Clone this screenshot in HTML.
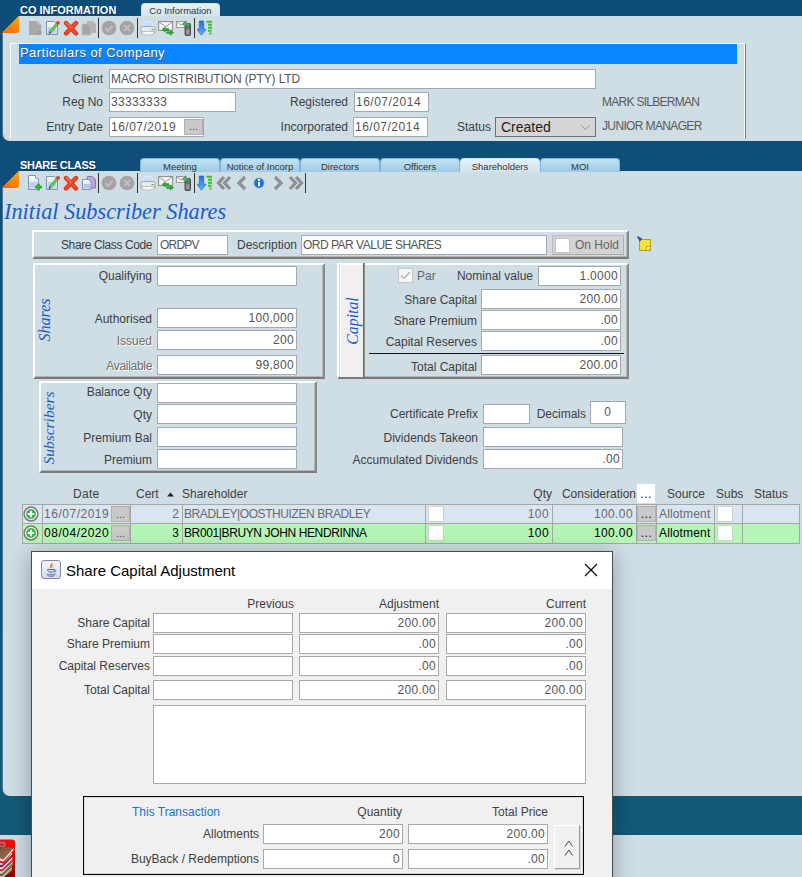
<!DOCTYPE html>
<html><head><meta charset="utf-8"><title>Share Class</title>
<style>
*{box-sizing:border-box;margin:0;padding:0}
html,body{width:802px;height:877px;overflow:hidden}
body{position:relative;font-family:"Liberation Sans",sans-serif;font-size:12px;color:#333;background:linear-gradient(#0d4d78 0px,#0f4f78 300px,#135a78 877px)}
.a{position:absolute;white-space:nowrap}
.pn{position:absolute;background:#cfdde5}
.l{position:absolute;white-space:nowrap;text-align:right;height:16px;line-height:16px;color:#3e3e3e}
.f{position:absolute;background:#fff;border:1px solid #a2aab0;height:20px;line-height:18px;padding:0 2px 0 1px;color:#555;white-space:nowrap;overflow:hidden}
.r{text-align:right;padding-right:2px;letter-spacing:.3px}
.ttl{position:absolute;text-shadow:1px 1px 0 rgba(0,0,0,.35);color:#fff;font-weight:bold;font-size:11px;height:14px;line-height:14px;white-space:nowrap}
.tab{position:absolute;height:14px;border-radius:4px 4px 0 0;background:linear-gradient(#c4e2f2,#9ccbe6);border:1px solid #7fb4d6;border-bottom:none;font-size:9.5px;line-height:15px;overflow:hidden;text-align:center;color:#333;white-space:nowrap}
.tab.on{background:linear-gradient(#e6f2f8,#cfe4ee);border-color:#cfe4ee}
.box{position:absolute;border:1px solid;border-color:#fff #6f7b82 #6f7b82 #fff;box-shadow:-1px -1px 0 #9aa5ab,1px 1px 0 #fff}
.btn{background:#c9c9c9;border:1px solid #b0b0b0;color:#555;text-align:center;line-height:12px;font-size:11px}
.bev{position:absolute;border:2px solid;border-color:#fff #8a8a8a #7a7a7a #fff;box-shadow:inset -1px -1px 0 #b4b4b4}
.vt{position:absolute;width:0;height:0;white-space:nowrap;font:italic 15px "Liberation Serif",serif;color:#1a5ccc}
.vt{display:flex;align-items:center;justify-content:center;transform:rotate(-90deg)}
.c{position:absolute;height:19px;border:1px solid #a9b1b7}
.g{height:16px;line-height:16px}
.f.d{border-color:#a8a8a8;color:#555}
.gl{background:#a6a6a6}
.cb{width:16px;height:16px;background:#fff;border:1px solid #cfcfcf}
</style></head><body>
<!-- ===== PANEL 1 ===== -->
<div class="ttl" style="left:20px;top:3px">CO INFORMATION</div>
<div class="tab on" style="left:141px;top:3px;width:79px;line-height:13px">Co Information</div>
<div class="pn" id="p1" style="left:3px;top:16px;width:810px;box-shadow:-1px 0 0 #497a99;height:125px;border-radius:0 0 0 7px"></div>
<div class="pn" id="p2" style="left:3px;top:171px;width:810px;box-shadow:-1px 0 0 #497a99;height:625px;border-radius:0 0 0 7px"></div>
<div class="pn" id="p3" style="left:0;top:835px;width:810px;height:50px"></div>
<svg class="a" style="left:0;top:839px" width="16" height="38"><defs><linearGradient id="gred" x1="0" y1="0" x2="0" y2="1"><stop offset="0" stop-color="#ff0a0a"/><stop offset=".5" stop-color="#e40000"/><stop offset="1" stop-color="#8e0000"/></linearGradient><linearGradient id="gbrn" x1="0" y1="0" x2="1" y2="1"><stop offset="0" stop-color="#7b4a36"/><stop offset="1" stop-color="#a9745c"/></linearGradient></defs>
<path d="M-2 0.500h14a3 3 0 0 1 3 3v36h-17z" fill="url(#gred)"/>
<ellipse cx="2" cy="5.500" rx="3" ry="2" fill="none" stroke="#8a8a8a" stroke-width="1.300"/>
<path d="M-1 7.500L13.500 9l-10 11.500L-1 19z" fill="url(#gbrn)"/>
<path d="M13.500 9v2.300L3.500 22.800-1 21.300V19l4.500 1.500z" fill="#e8e4df"/>
<path d="M12 13.500v3L2 27l-3-1v-2.800l4.500 1.600z" fill="#dedad4"/><path d="M12.300 15.800L2 26.800l-3-1" fill="none" stroke="#1f2a55" stroke-width="1"/>
<path d="M12.500 18v3.500L2 31.500l-3-1v-3l3 .8z" fill="#d9d5cf"/><path d="M12.500 20.500L2 31l-3-.8" fill="none" stroke="#6a3a6a" stroke-width=".8"/>
<path d="M13 22.500v3.500L2 36l-3-1v-3.500l3 1z" fill="#d6d2cc"/><path d="M13 24.500L2 35.500l-3-1" fill="none" stroke="#4f7a2e" stroke-width="1.100"/>
<path d="M12 28v3L3 39h-4v-2.500l3 .5z" fill="#d2cec8"/><path d="M12 30L3 38.500" fill="none" stroke="#4f7a2e" stroke-width=".9"/>
</svg>
<!--P1-->

<svg width="0" height="0" style="position:absolute">
<defs>
<linearGradient id="gor" x1=".7" y1="0" x2=".3" y2="1"><stop offset="0" stop-color="#ffa800"/><stop offset="1" stop-color="#f56c00"/></linearGradient><linearGradient id="gdoc" x1="0" y1="0" x2="0" y2="1"><stop offset="0" stop-color="#fdfeff"/><stop offset="1" stop-color="#c9d6ee"/></linearGradient>
<linearGradient id="gblue" x1="0" y1="0" x2="0" y2="1"><stop offset="0" stop-color="#1d6fe0"/><stop offset="1" stop-color="#5fb2ff"/></linearGradient>
<symbol id="i-docg" viewBox="0 0 16 16"><path d="M2 1h8l4 4v10H2z" fill="#a9a9a9"/><path d="M10 1v4h4" fill="#bdbdbd"/><circle cx="12.5" cy="12.5" r="2.3" fill="#a0a0a0"/></symbol>
<symbol id="i-new" viewBox="0 0 16 16"><path d="M1.500 .5h7l3 3v11h-10z" fill="url(#gdoc)" stroke="#7f93b8"/><path d="M8.500 .5v3h3" fill="#dfe8f7" stroke="#7f93b8" stroke-width=".7"/><rect x="2.500" y="7" width="8" height="5" fill="#b7c6e6" opacity=".7"/><path d="M11.500 9.800v4.400M9.300 12h4.400" stroke="#2db52d" stroke-width="3" stroke-linecap="round"/></symbol>
<symbol id="i-edit" viewBox="0 0 16 16"><path d="M1.5 1.5h8l3 3v10h-11z" fill="url(#gdoc)" stroke="#7f93b8"/><rect x="3" y="7" width="8" height="5" fill="#b7c6e6" opacity=".7"/><path d="M5 12.5L12.2 3.6" stroke="#3cb83c" stroke-width="3"/><path d="M5 12.5L12.2 3.6" stroke="#7fe07f" stroke-width="1"/><circle cx="13" cy="2.8" r="1.9" fill="#e23a2a"/><path d="M3.6 14.2l.6-2.6 1.8 1.4z" fill="#444"/></symbol>
<symbol id="i-del" viewBox="0 0 16 16"><path d="M3 3L13 13.500M13 3L3 13.500" stroke="#d92c14" stroke-width="4.400" stroke-linecap="round"/><path d="M3 3L13 13.500M13 3L3 13.500" stroke="#f04a2a" stroke-width="2.600" stroke-linecap="round"/><path d="M3.4 2.6L8 7.4" stroke="#ff7a55" stroke-width="1.2" stroke-linecap="round"/></symbol>
<symbol id="i-copyg" viewBox="0 0 16 16"><path d="M6 1h6l3 3v9H6z" fill="#b4b4b4"/><path d="M1 4h6l3 3v8H1z" fill="#a6a6a6" stroke="#c4c4c4" stroke-width=".6"/></symbol>
<symbol id="i-copy" viewBox="0 0 16 16"><path d="M6.5 1.5h5l3 3v8.500h-8z" fill="#b9a7dc" stroke="#8c78b8"/><path d="M1.5 4.500h6l2.500 2.500v7.500h-8.500z" fill="url(#gdoc)" stroke="#7f93b8"/><rect x="2.500" y="9" width="6.500" height="4" fill="#aebfe3" opacity=".8"/></symbol>
<symbol id="i-ok" viewBox="0 0 16 16"><circle cx="8" cy="8" r="7.3" fill="#a4a4a4"/><path d="M4.300 8.300l2.700 2.700 4.800-5.200" stroke="#bdbdbd" stroke-width="2.200" fill="none"/></symbol>
<symbol id="i-no" viewBox="0 0 16 16"><circle cx="8" cy="8" r="7.3" fill="#a4a4a4"/><path d="M5 5l6 6M11 5l-6 6" stroke="#bdbdbd" stroke-width="2.400"/></symbol>
<symbol id="i-print" viewBox="0 0 16 16"><path d="M4.500 1l7 .8 1.500 5H3z" fill="#bfe0ff" stroke="#e9eef3" stroke-width=".8"/><path d="M1 8.500c0-1.500 1-2 2-2h10c1 0 2 .5 2 2V12c0 1.200-1 1.600-2 1.600H3c-1 0-2-.4-2-1.600z" fill="#e9eaec" stroke="#8f949b" stroke-width=".8"/><path d="M2 11.500h12v2.500c-4 1.500-8 1.500-12 0z" fill="#f7f7f7" stroke="#a7abb0" stroke-width=".7"/><rect x="11.500" y="9" width="2.200" height="1.100" fill="#3cb33c"/></symbol>
<symbol id="i-mail" viewBox="0 0 16 16"><rect x=".6" y="1.600" width="14" height="8.800" fill="#f4f4f4" stroke="#8b8b8b"/><path d="M.8 1.800l6.800 5 6.800-5" fill="none" stroke="#8b8b8b" stroke-width=".9"/><path d="M4 9.500l3.200-2.600v1.700h3.600v1.900H7.200v1.700z" fill="#2fae2f" stroke="#1d7d1d" stroke-width=".5"/><path d="M15.600 12.600l-3.200-2.600v1.700H8.800v1.900h3.600v1.700z" fill="#2fae2f" stroke="#1d7d1d" stroke-width=".5"/></symbol>
<symbol id="i-mailph" viewBox="0 0 16 16"><rect x=".5" y="1.500" width="9" height="6" fill="#f4f4f4" stroke="#8b8b8b" stroke-width=".8"/><path d="M.6 1.700l4.400 3.300 4.400-3.300" fill="none" stroke="#8b8b8b" stroke-width=".8"/><rect x="9" y="3.500" width="5.500" height="12" rx="1" fill="#6e6e6e" stroke="#3a3a3a" stroke-width=".8"/><rect x="10.200" y="9.500" width="3.100" height="4.600" fill="#9c9c9c"/><path d="M6.500 4.200L10 .8v2c2.600 0 4 1.600 4 4.400-1-1.700-2.200-2.100-4-2.100v2.200z" fill="#49b86a" stroke="#237e3c" stroke-width=".5"/></symbol>
<symbol id="i-sort" viewBox="0 0 16 16"><path d="M2.300 1h4.400v8.200h2.500L4.500 15.200-.2 9.200h2.500z" fill="url(#gblue)" stroke="#1b5fc4" stroke-width=".6"/><path d="M9.500 1.700h5.500M11 4.700h4M11 7.700h4M11 10.700h3.500M12.500 13.500h2" stroke="#35c322" stroke-width="2"/></symbol>
<symbol id="i-first" viewBox="0 0 16 16"><path d="M8 2L2.500 8 8 14M14 2L8.500 8 14 14" fill="none" stroke="#8f8f8f" stroke-width="3.200"/></symbol>
<symbol id="i-prev" viewBox="0 0 16 16"><path d="M11 2L5 8l6 6" fill="none" stroke="#8f8f8f" stroke-width="3.200"/></symbol>
<symbol id="i-next" viewBox="0 0 16 16"><path d="M5 2l6 6-6 6" fill="none" stroke="#8f8f8f" stroke-width="3.200"/></symbol>
<symbol id="i-last" viewBox="0 0 16 16"><path d="M2 2l5.500 6L2 14M8 2l5.500 6L8 14" fill="none" stroke="#8f8f8f" stroke-width="3.200"/></symbol>
<symbol id="i-info" viewBox="0 0 16 16"><circle cx="8" cy="8" r="5" fill="#1f6fd8" stroke="#6aa6f0" stroke-width=".8"/><rect x="7" y="7" width="2" height="4.200" fill="#fff"/><circle cx="8" cy="5" r="1.200" fill="#fff"/></symbol>
</defs></svg>

<svg class="a" style="left:2px;top:16px" width="18" height="18"><path d="M0 0H17L0 17z" fill="#0d4d78"/><path d="M17 0V14.500a2.500 2.500 0 0 1-2.500 2.500H0z" fill="url(#gor)"/></svg>
<svg class="a" style="left:27px;top:20px" width="16" height="16"><use href="#i-docg"/></svg>
<svg class="a" style="left:45px;top:20px" width="16" height="16"><use href="#i-edit"/></svg>
<svg class="a" style="left:63px;top:20px" width="16" height="16"><use href="#i-del"/></svg>
<svg class="a" style="left:81px;top:20px" width="16" height="16"><use href="#i-copyg"/></svg>
<svg class="a" style="left:101px;top:20px" width="16" height="16"><use href="#i-ok"/></svg>
<svg class="a" style="left:119px;top:20px" width="16" height="16"><use href="#i-no"/></svg>
<svg class="a" style="left:140px;top:20px" width="16" height="16"><use href="#i-print"/></svg>
<svg class="a" style="left:158px;top:20px" width="16" height="16"><use href="#i-mail"/></svg>
<svg class="a" style="left:176px;top:20px" width="16" height="16"><use href="#i-mailph"/></svg>
<svg class="a" style="left:197px;top:20px" width="16" height="16"><use href="#i-sort"/></svg>
<div class="a" style="left:98px;top:18px;width:1px;height:20px;background:#333"></div>
<div class="a" style="left:137px;top:18px;width:1px;height:20px;background:#333"></div>
<div class="a" style="left:194px;top:18px;width:1px;height:20px;background:#333"></div>
<div class="a" style="left:10px;top:43px;width:736px;height:96px;border:1px solid;border-color:#fff #777 #cfdde5 #fff;box-shadow:inset -1px 0 0 #fff"></div>
<div class="a" style="left:19px;top:44px;width:718px;height:20px;background:#0a84ff;color:#fff;font-size:13px;line-height:18px;padding-left:1px;text-shadow:1px 1px 0 #555;letter-spacing:.45px">Particulars of Company</div>
<div class="l" style="left:40px;top:71px;width:63px">Client</div>
<div class="f" style="left:109px;top:69px;width:487px;letter-spacing:-.12px">MACRO DISTRIBUTION (PTY) LTD</div>
<div class="l" style="left:40px;top:94px;width:63px">Reg No</div>
<div class="f" style="left:109px;top:92px;width:127px;letter-spacing:.35px">33333333</div>
<div class="l" style="left:20px;top:119px;width:83px">Entry Date</div>
<div class="f" style="left:109px;top:117px;width:95px;letter-spacing:.5px">16/07/2019</div>
<div class="a btn" style="left:184px;top:119px;width:19px;height:16px">...</div>
<div class="l" style="left:270px;top:94px;width:78px">Registered</div>
<div class="f" style="left:354px;top:92px;width:75px;letter-spacing:.5px">16/07/2014</div>
<div class="l" style="left:260px;top:119px;width:88px">Incorporated</div>
<div class="f" style="left:353px;top:117px;width:75px;letter-spacing:.5px">16/07/2014</div>
<div class="l" style="left:440px;top:119px;width:51px">Status</div>
<div class="a" style="left:495px;top:117px;width:101px;height:20px;background:#d6d6d6;border:1px solid #707070;font-size:14px;line-height:18px;padding-left:5px;color:#1a1a1a">Created<svg class="a" style="left:84px;top:6px" width="11" height="7"><path d="M1 1l4.500 4.500L10 1" fill="none" stroke="#9a9a9a" stroke-width="1"/></svg></div>
<div class="a" style="left:602px;top:94px;height:16px;line-height:16px;color:#5a5a5a;letter-spacing:-.72px">MARK SILBERMAN</div>
<div class="a" style="left:602px;top:118px;height:16px;line-height:16px;color:#5a5a5a;letter-spacing:-.64px">JUNIOR MANAGER</div>

<!--/P1-->
<!--P2-->

<div class="ttl" style="left:20px;top:158px;letter-spacing:-.3px">SHARE CLASS</div>
<div class="tab" style="left:140px;top:158px;width:80px">Meeting</div>
<div class="tab" style="left:220px;top:158px;width:80px">Notice of Incorp</div>
<div class="tab" style="left:300px;top:158px;width:80px">Directors</div>
<div class="tab" style="left:380px;top:158px;width:80px">Officers</div>
<div class="tab on" style="left:460px;top:158px;width:80px">Shareholders</div>
<div class="tab" style="left:540px;top:158px;width:80px">MOI</div>

<svg class="a" style="left:2px;top:171px" width="18" height="18"><path d="M0 0H17L0 17z" fill="#0e4e78"/><path d="M17 0V14.500a2.500 2.500 0 0 1-2.500 2.500H0z" fill="url(#gor)"/></svg>
<svg class="a" style="left:27px;top:175px" width="16" height="16"><use href="#i-new"/></svg>
<svg class="a" style="left:45px;top:175px" width="16" height="16"><use href="#i-edit"/></svg>
<svg class="a" style="left:63px;top:175px" width="16" height="16"><use href="#i-del"/></svg>
<svg class="a" style="left:81px;top:175px" width="16" height="16"><use href="#i-copy"/></svg>
<svg class="a" style="left:101px;top:175px" width="16" height="16"><use href="#i-ok"/></svg>
<svg class="a" style="left:119px;top:175px" width="16" height="16"><use href="#i-no"/></svg>
<svg class="a" style="left:140px;top:175px" width="16" height="16"><use href="#i-print"/></svg>
<svg class="a" style="left:158px;top:175px" width="16" height="16"><use href="#i-mail"/></svg>
<svg class="a" style="left:176px;top:175px" width="16" height="16"><use href="#i-mailph"/></svg>
<svg class="a" style="left:197px;top:175px" width="16" height="16"><use href="#i-sort"/></svg>
<svg class="a" style="left:216px;top:175px" width="16" height="16"><use href="#i-first"/></svg>
<svg class="a" style="left:234px;top:175px" width="16" height="16"><use href="#i-prev"/></svg>
<svg class="a" style="left:251px;top:175px" width="16" height="16"><use href="#i-info"/></svg>
<svg class="a" style="left:270px;top:175px" width="16" height="16"><use href="#i-next"/></svg>
<svg class="a" style="left:288px;top:175px" width="16" height="16"><use href="#i-last"/></svg>
<div class="a" style="left:98px;top:173px;width:1px;height:20px;background:#333"></div>
<div class="a" style="left:137px;top:173px;width:1px;height:20px;background:#333"></div>
<div class="a" style="left:194px;top:173px;width:1px;height:20px;background:#333"></div>
<div class="a" style="left:305px;top:173px;width:1px;height:20px;background:#333"></div>
<div class="a" style="left:4px;top:198px;font:italic 22.300px 'Liberation Serif',serif;color:#1a5ccc;height:28px;line-height:28px">Initial Subscriber Shares</div>
<!-- share class row -->
<div class="bev" style="left:32px;top:230px;width:597px;height:29px"></div>
<div class="l" style="left:32px;top:237px;width:120px;letter-spacing:-.4px">Share Class Code</div>
<div class="f" style="left:157px;top:235px;width:71px;height:20px;letter-spacing:-.8px;padding-left:2px">ORDPV</div>
<div class="l" style="left:217px;top:237px;width:80px;">Description</div>
<div class="f" style="left:301px;top:235px;width:246px;height:20px;letter-spacing:-.5px">ORD PAR VALUE SHARES</div>
<div class="a" style="left:552px;top:235px;width:72px;height:20px;background:#d3d3d3;border:1px solid #c0c0c0;border-color:#bcbcbc #b0b0b0 #a8a8a8 #bcbcbc"></div>
<div class="a" style="left:555px;top:238px;width:15px;height:15px;background:#fff;border:1px solid #c4c4c4"></div>
<div class="a" style="left:575px;top:237px;height:16px;line-height:16px;color:#666">On Hold</div>
<svg class="a" style="left:636px;top:235px" width="17" height="17"><path d="M3.500 4.500h11v11h-11z" fill="#f3e23c" stroke="#b89a1c"/><path d="M10.500 15.500v-4h4" fill="#fff7a8" stroke="#b89a1c" stroke-width=".8"/><path d="M1.500 1.500l4.500 2.500-2.200 2z" fill="#2a62c8" stroke="#17408e" stroke-width=".8"/></svg>
<!-- shares box -->
<div class="bev" style="left:33px;top:263px;width:292px;height:116px"></div>
<div class="vt" style="left:45px;top:320px;font-size:16px">Shares</div>
<div class="l" style="left:32px;top:268px;width:120px;">Qualifying</div>
<div class="f" style="left:157px;top:266px;width:140px;height:20px;"></div>
<div class="l" style="left:32px;top:311px;width:120px;">Authorised</div>
<div class="f r" style="left:157px;top:308px;width:140px;height:20px;">100,000</div>
<div class="l" style="left:32px;top:333px;width:120px;color:#6e6e6e;text-shadow:1px 1px 0 #fff">Issued</div>
<div class="f r" style="left:157px;top:330px;width:140px;height:20px;">200</div>
<div class="l" style="left:32px;top:358px;width:120px;color:#6e6e6e;text-shadow:1px 1px 0 #fff;letter-spacing:-.3px">Available</div>
<div class="f r" style="left:157px;top:355px;width:140px;height:20px;">99,800</div>
<!-- capital box -->
<div class="bev" style="left:337px;top:263px;width:292px;height:116px"></div>
<div class="a" style="left:340px;top:265px;width:23px;height:112px;background:#f0f0f0;border-left:1px solid #fff"></div><div class="a" style="left:363px;top:263px;width:2px;height:114px;background:linear-gradient(90deg,#666 50%,#939393 50%)"></div>
<div class="vt" style="left:353px;top:321px;font-size:15.800px">Capital</div>
<div class="a" style="left:398px;top:268px;width:15px;height:15px;background:#f6f6f6;border:1px solid #c6c6c6"><svg class="a" style="left:1px;top:2px" width="11" height="9"><path d="M1 4.500l3 3L10 1" fill="none" stroke="#b0b0b0" stroke-width="1.200"/></svg></div>
<div class="a" style="left:417px;top:268px;height:16px;line-height:16px;color:#666">Par</div>
<div class="l" style="left:413px;top:268px;width:120px;">Nominal value</div>
<div class="f r" style="left:538px;top:266px;width:83px;height:20px">1.0000</div>
<div class="l" style="left:357px;top:292px;width:120px;">Share Capital</div>
<div class="f r" style="left:481px;top:289px;width:140px;height:20px;">200.00</div>
<div class="l" style="left:357px;top:313px;width:120px;">Share Premium</div>
<div class="f r" style="left:481px;top:310px;width:140px;height:20px;">.00</div>
<div class="l" style="left:357px;top:334px;width:120px;">Capital Reserves</div>
<div class="f r" style="left:481px;top:331px;width:140px;height:20px;">.00</div>
<div class="a" style="left:369px;top:353px;width:255px;height:1px;background:#111"></div>
<div class="l" style="left:357px;top:359px;width:120px;">Total Capital</div>
<div class="f r" style="left:481px;top:355px;width:140px;height:20px;">200.00</div>
<!-- subscribers box -->
<div class="bev" style="left:39px;top:381px;width:278px;height:92px"></div>
<div class="vt" style="left:49px;top:428px;font-size:15.500px">Subscribers</div>
<div class="l" style="left:32px;top:384px;width:120px;">Balance Qty</div>
<div class="f" style="left:157px;top:383px;width:140px;height:20px;"></div>
<div class="l" style="left:32px;top:407px;width:120px;">Qty</div>
<div class="f" style="left:157px;top:404px;width:140px;height:20px;"></div>
<div class="l" style="left:32px;top:430px;width:120px;">Premium Bal</div>
<div class="f" style="left:157px;top:427px;width:140px;height:20px;"></div>
<div class="l" style="left:32px;top:452px;width:120px;">Premium</div>
<div class="f" style="left:157px;top:449px;width:140px;height:20px;"></div>
<div class="l" style="left:358px;top:406px;width:120px;">Certificate Prefix</div>
<div class="f" style="left:483px;top:404px;width:47px;height:20px;"></div>
<div class="l" style="left:526px;top:406px;width:60px;">Decimals</div>
<div class="f" style="left:590px;top:401px;width:36px;height:23px;text-align:center;line-height:20px">0</div>
<div class="l" style="left:358px;top:430px;width:120px;">Dividends Takeon</div>
<div class="f" style="left:483px;top:427px;width:140px;height:20px;"></div>
<div class="l" style="left:338px;top:452px;width:140px;">Accumulated Dividends</div>
<div class="f r" style="left:483px;top:449px;width:140px;height:20px;">.00</div>

<!--/P2-->
<!--GRID-->

<div class="l" style="left:73px;top:486px;text-align:left;letter-spacing:0.3px">Date</div>
<div class="l" style="left:136px;top:486px;text-align:left;letter-spacing:0px">Cert</div>
<svg class="a" style="left:167px;top:492px" width="7" height="5"><path d="M0 4.500L3.500 .5 7 4.500z" fill="#222"/></svg>
<div class="l" style="left:182px;top:486px;text-align:left;letter-spacing:0px">Shareholder</div>
<div class="l" style="left:452px;top:486px;width:100px;letter-spacing:0px">Qty</div>
<div class="l" style="left:536px;top:486px;width:100px;letter-spacing:0px">Consideration</div>
<div class="a" style="left:637px;top:484px;width:18px;height:19px;background:#fff;color:#111;text-align:center;line-height:21px;letter-spacing:.5px">...</div>
<div class="l" style="left:667px;top:486px;text-align:left;letter-spacing:0px">Source</div>
<div class="l" style="left:716px;top:486px;text-align:left;letter-spacing:0px">Subs</div>
<div class="l" style="left:754px;top:486px;text-align:left;letter-spacing:0px">Status</div>
<div class="a" style="left:22px;top:504px;width:778px;height:20px;background:#d9e6f1"></div>
<svg class="a" style="left:23px;top:506px" width="16" height="16"><circle cx="8" cy="8" r="6.900" fill="#f4f4f4" stroke="#7a7a7a" stroke-width="1.500"/><circle cx="8" cy="8" r="4.900" fill="#3fb54a"/><path d="M8 4.800v6.400M4.800 8h6.400" stroke="#fff" stroke-width="1.800"/></svg>
<div class="a g" style="left:44px;top:506px;color:#6a6a6a;letter-spacing:.52px">16/07/2019</div>
<div class="a btn" style="left:111px;top:506px;width:19px;height:16px;line-height:14px">...</div>
<div class="a g" style="left:131px;top:506px;width:48px;text-align:right;color:#6a6a6a">2</div>
<div class="a g" style="left:184px;top:506px;color:#6a6a6a;letter-spacing:-0.42px">BRADLEY|OOSTHUIZEN BRADLEY</div>
<div class="a cb" style="left:428px;top:506px"></div>
<div class="a g" style="left:449px;top:506px;width:100px;text-align:right;color:#6a6a6a;letter-spacing:.4px">100</div>
<div class="a g" style="left:533px;top:506px;width:100px;text-align:right;color:#6a6a6a;letter-spacing:.4px">100.00</div>
<div class="a btn" style="left:637px;top:506px;width:19px;height:16px;line-height:15px;color:#111;font-size:12px;letter-spacing:.5px">...</div>
<div class="a g" style="left:659px;top:506px;color:#6a6a6a;letter-spacing:.15px">Allotment</div>
<div class="a cb" style="left:717px;top:506px"></div>
<div class="a" style="left:22px;top:523px;width:778px;height:21px;background:#b5f5b5"></div>
<svg class="a" style="left:23px;top:525px" width="16" height="16"><circle cx="8" cy="8" r="6.900" fill="#f4f4f4" stroke="#7a7a7a" stroke-width="1.500"/><circle cx="8" cy="8" r="4.900" fill="#3fb54a"/><path d="M8 4.800v6.400M4.800 8h6.400" stroke="#fff" stroke-width="1.800"/></svg>
<div class="a g" style="left:44px;top:525px;color:#000;letter-spacing:.52px">08/04/2020</div>
<div class="a btn" style="left:111px;top:525px;width:19px;height:16px;line-height:14px">...</div>
<div class="a g" style="left:131px;top:525px;width:48px;text-align:right;color:#000">3</div>
<div class="a g" style="left:184px;top:525px;color:#000;letter-spacing:-0.38px">BR001|BRUYN JOHN HENDRINNA</div>
<div class="a cb" style="left:428px;top:525px"></div>
<div class="a g" style="left:449px;top:525px;width:100px;text-align:right;color:#000;letter-spacing:.4px">100</div>
<div class="a g" style="left:533px;top:525px;width:100px;text-align:right;color:#000;letter-spacing:.4px">100.00</div>
<div class="a btn" style="left:637px;top:525px;width:19px;height:16px;line-height:15px;color:#111;font-size:12px;letter-spacing:.5px">...</div>
<div class="a g" style="left:659px;top:525px;color:#000;letter-spacing:.15px">Allotment</div>
<div class="a cb" style="left:717px;top:525px"></div>
<div class="a gl" style="left:22px;top:504px;width:1px;height:40px"></div><div class="a gl" style="left:42px;top:504px;width:1px;height:40px"></div><div class="a gl" style="left:130px;top:504px;width:1px;height:40px"></div><div class="a gl" style="left:182px;top:504px;width:1px;height:40px"></div><div class="a gl" style="left:425px;top:504px;width:1px;height:40px"></div><div class="a gl" style="left:552px;top:504px;width:1px;height:40px"></div><div class="a gl" style="left:636px;top:504px;width:1px;height:40px"></div><div class="a gl" style="left:656px;top:504px;width:1px;height:40px"></div><div class="a gl" style="left:714px;top:504px;width:1px;height:40px"></div><div class="a gl" style="left:742px;top:504px;width:1px;height:40px"></div><div class="a gl" style="left:799px;top:504px;width:1px;height:40px"></div><div class="a gl" style="left:22px;top:504px;width:778px;height:1px"></div><div class="a gl" style="left:22px;top:523px;width:778px;height:1px"></div><div class="a gl" style="left:22px;top:543px;width:778px;height:1px"></div>

<!--/GRID-->
<!--DLG-->

<div class="a" style="left:31px;top:551px;width:582px;height:340px;background:#f0f0f0;border:1px solid #4a4a4a;box-shadow:0 4px 20px 1px rgba(0,0,0,.28)"></div>
<div class="a" style="left:32px;top:552px;width:580px;height:37px;background:#fff"></div>
<svg class="a" style="left:41px;top:560px" width="20" height="19"><defs><linearGradient id="gjv" x1="0" y1="0" x2="0" y2="1"><stop offset="0" stop-color="#f4f6fa"/><stop offset="1" stop-color="#d3dae8"/></linearGradient></defs><rect x=".5" y=".5" width="19" height="18" rx="2.500" fill="url(#gjv)" stroke="#7f8da8"/><path d="M10.800 3.200c1.600 1.400-2.800 2.600-.6 4.800" fill="none" stroke="#e8742a" stroke-width="1.500"/><path d="M12 5.500c.8.800-.8 1.300-.2 2.300" fill="none" stroke="#f0a060" stroke-width=".9"/><path d="M6.500 9.500h7c0 3.600-7 3.600-7 0z" fill="#dfe6f2" stroke="#4b6a9e" stroke-width="1"/><path d="M13.500 10c2-.3 2 2-.4 2.200" fill="none" stroke="#4b6a9e" stroke-width=".9"/><path d="M5.500 13.800c3 1.400 6 1.400 9 0M6.500 15.600c2.500 1 4.500 1 7 0" fill="none" stroke="#4b6a9e" stroke-width=".9"/></svg>
<div class="a" style="left:66px;top:561px;font-size:15px;height:20px;line-height:20px;color:#000">Share Capital Adjustment</div>
<svg class="a" style="left:584px;top:563px" width="14" height="14"><path d="M1 1l12 12M13 1L1 13" stroke="#111" stroke-width="1.300"/></svg>
<div class="l" style="left:154px;top:596px;width:140px;">Previous</div>
<div class="l" style="left:299px;top:596px;width:140px;">Adjustment</div>
<div class="l" style="left:446px;top:596px;width:140px;">Current</div>
<div class="l" style="left:10px;top:615px;width:140px;">Share Capital</div><div class="f d r" style="left:153px;top:613px;width:140px;height:20px"></div><div class="f d r" style="left:299px;top:613px;width:140px;height:20px">200.00</div><div class="f d r" style="left:446px;top:613px;width:140px;height:20px">200.00</div>
<div class="l" style="left:10px;top:636px;width:140px;">Share Premium</div><div class="f d r" style="left:153px;top:634px;width:140px;height:20px"></div><div class="f d r" style="left:299px;top:634px;width:140px;height:20px">.00</div><div class="f d r" style="left:446px;top:634px;width:140px;height:20px">.00</div>
<div class="l" style="left:10px;top:658px;width:140px;">Capital Reserves</div><div class="f d r" style="left:153px;top:656px;width:140px;height:20px"></div><div class="f d r" style="left:299px;top:656px;width:140px;height:20px">.00</div><div class="f d r" style="left:446px;top:656px;width:140px;height:20px">.00</div>
<div class="l" style="left:10px;top:682px;width:140px;">Total Capital</div><div class="f d r" style="left:153px;top:680px;width:140px;height:20px"></div><div class="f d r" style="left:299px;top:680px;width:140px;height:20px">200.00</div><div class="f d r" style="left:446px;top:680px;width:140px;height:20px">200.00</div>

<div class="f d" style="left:153px;top:705px;width:433px;height:79px"></div>
<div class="a" style="left:83px;top:796px;width:501px;height:79px;border:1px solid #000;box-shadow:inset 0 0 0 1px #d9d9d9"></div>
<div class="a" style="left:132px;top:804px;height:16px;line-height:16px;color:#1b78c0">This Transaction</div>
<div class="l" style="left:262px;top:804px;width:140px;">Quantity</div>
<div class="l" style="left:408px;top:804px;width:140px;">Total Price</div>
<div class="l" style="left:119px;top:826px;width:140px;">Allotments</div>
<div class="f d r" style="left:263px;top:824px;width:140px;height:20px">200</div>
<div class="f d r" style="left:408px;top:824px;width:140px;height:20px">200.00</div>
<div class="l" style="left:119px;top:851px;width:140px;">BuyBack / Redemptions</div>
<div class="f d r" style="left:263px;top:849px;width:140px;height:20px">0</div>
<div class="f d r" style="left:408px;top:849px;width:140px;height:20px">.00</div>
<div class="a" style="left:554px;top:825px;width:26px;height:44px;background:#f0f0f0;border:1px solid;border-color:#fff #9c9c9c #9c9c9c #fff;box-shadow:1px 1px 0 #dcdcdc"><svg class="a" style="left:9px;top:14px" width="10" height="17"><path d="M1 6.500L4.800 1 8.600 6.500M1 15.500L4.800 10 8.600 15.500" fill="none" stroke="#444" stroke-width="1"/></svg></div>

<!--/DLG-->
</body></html>
